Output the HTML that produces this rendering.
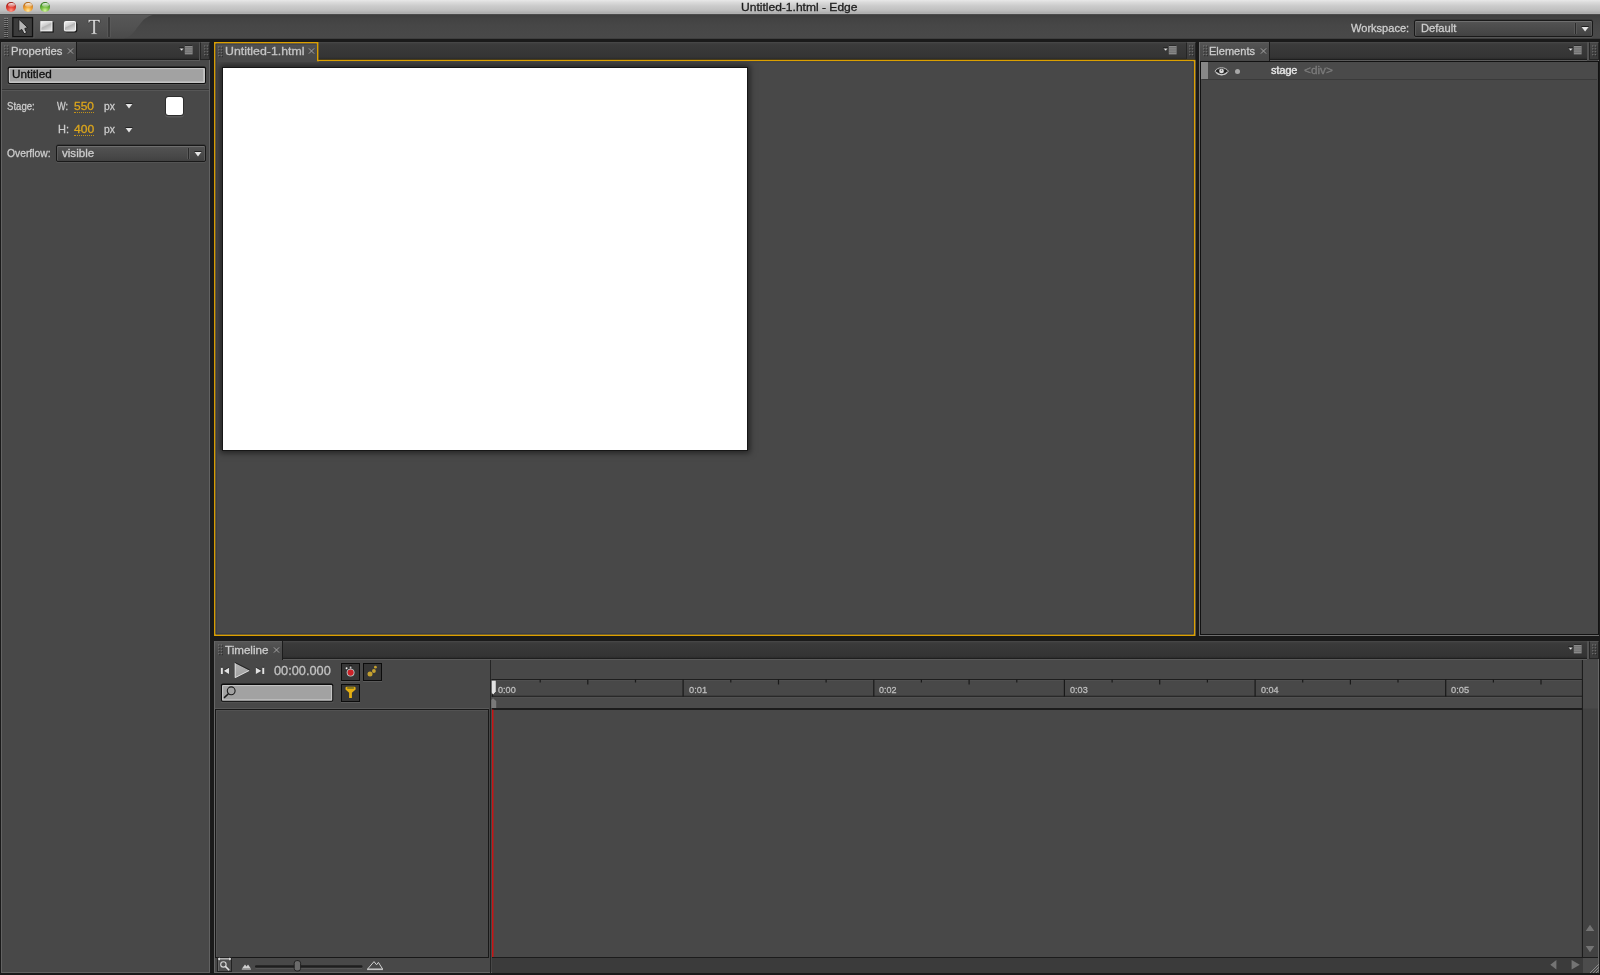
<!DOCTYPE html>
<html><head><meta charset="utf-8">
<style>
*{box-sizing:border-box;margin:0;padding:0}
html,body{width:1600px;height:975px;overflow:hidden;background:#1a1a1a;font-family:"Liberation Sans",sans-serif;font-size:10.5px;color:#d2d2d2}
.abs{position:absolute}
#titlebar{left:0;top:0;width:1600px;height:14px;background:linear-gradient(#e8e8e8 0,#dadada 2.5px,#cbcbcb 6px,#c0c0c0 10px,#b2b2b2 12.4px,#a6a6a6 13px,#b0b0b0 13.5px,#8a8a8a 14px)}
#title{left:0;width:1600px;top:1px;text-align:center;font-size:11.5px;color:#1e1e1e;line-height:13px;letter-spacing:.15px}
.tl{width:10px;height:10px;border-radius:50%;top:2px}
#toolbar{left:0;top:14px;width:1600px;height:25px;background:linear-gradient(#565656 0,#3e3e3e 1.2px,#434343 5px,#474747 12px,#494949 24px,#333 25px)}
.panel{background:#484848}
.tabrow{height:19px;background:linear-gradient(#4a4a4a 0,#3e3e3e 1.5px,#3a3a3a 3px,#343434 15px,#2c2c2c 16.8px,#1e1e1e 17.2px,#1e1e1e 18px,#5c5c5c 18.2px,#5a5a5a 19px)}
.tab{height:19px;top:0;left:0;background:linear-gradient(#626262 0,#545454 1.5px,#4c4c4c 8px,#484848 18px);border-right:1px solid #1c1c1c;font-size:10.5px;color:#d6d6d6;line-height:18px;white-space:nowrap}
.txt{white-space:nowrap;line-height:12px}

.grip{width:4px;height:10px;background-image:radial-gradient(circle at 25% 25%,#8a8a8a 0,#8a8a8a .55px,transparent .8px);background-size:2px 2px;opacity:.9}
.gripbox{top:0;width:10px;height:17.5px;background:linear-gradient(#484848,#3a3a3a);border:1px solid #252525;border-top-color:#555}
.menuic{width:15px;height:10px}
.lbl{color:#cdcdcd;font-size:10.5px;letter-spacing:.25px}
.org{color:#d9a21b;font-size:11px;letter-spacing:.45px;border-bottom:1px dotted #c9961a;line-height:11px;height:12.5px}
.tri{width:8px;height:6px}

.tbtn{width:19px;height:18px;background:#363636;border:1px solid #0c0c0c;box-shadow:0 1px 0 rgba(255,255,255,.1)}
</style></head><body>
<div id="root" class="abs" style="left:0;top:0;width:1600px;height:975px;will-change:transform">
<div id="titlebar" class="abs"></div>
<div class="abs tl" style="left:6px;background:radial-gradient(circle at 50% 85%,#ff9a8a 0,#e8493c 35%,#b5211a 70%,#7a1a15 100%)"></div>
<div class="abs tl" style="left:23px;background:radial-gradient(circle at 50% 85%,#ffe9a0 0,#f2a83a 35%,#c9771b 70%,#8a5210 100%)"></div>
<div class="abs tl" style="left:40px;background:radial-gradient(circle at 50% 85%,#d4f5a0 0,#7cc245 35%,#3f8f22 70%,#2a5f18 100%)"></div>
<div class="abs" style="left:7.5px;top:2.5px;width:7px;height:4px;border-radius:50%;background:linear-gradient(rgba(255,255,255,.95),rgba(255,255,255,.15))"></div>
<div class="abs" style="left:24.5px;top:2.5px;width:7px;height:4px;border-radius:50%;background:linear-gradient(rgba(255,255,255,.95),rgba(255,255,255,.15))"></div>
<div class="abs" style="left:41.5px;top:2.5px;width:7px;height:4px;border-radius:50%;background:linear-gradient(rgba(255,255,255,.95),rgba(255,255,255,.15))"></div>

<div id="toolbar" class="abs"></div>
<!--TOOLBAR-->
<svg class="abs" style="left:0;top:14px" width="1600" height="25" viewBox="0 0 1600 25">
<defs>
<linearGradient id="rg" x1="0" y1="0" x2="1" y2="1"><stop offset="0" stop-color="#fdfdfd"/><stop offset=".5" stop-color="#d8d8d8"/><stop offset="1" stop-color="#a9a9a9"/></linearGradient>
<linearGradient id="rg2" x1="0" y1="0" x2=".6" y2="1"><stop offset="0" stop-color="#efefef"/><stop offset=".45" stop-color="#cfcfcf"/><stop offset=".55" stop-color="#b4b4b4"/><stop offset="1" stop-color="#d8d8d8"/></linearGradient><linearGradient id="gl" x1="0" y1="0" x2="0" y2="1"><stop offset="0" stop-color="#575757"/><stop offset=".5" stop-color="#525252"/><stop offset="1" stop-color="#4a4a4a"/></linearGradient>
</defs>
<path d="M0 .8 H153 C147 3 144 5 142.5 7 C140 10 139 11 137.5 13 C135 17 134 18 132.5 19.5 C130 22 128 23.5 124 24.2 H0Z" fill="url(#gl)"/>
<g stroke="#2a2a2a" stroke-width="1"><path d="M4.3 5.4h3.7M4.3 7.4h3.7M4.3 9.4h3.7M4.3 11.4h3.7M4.3 13.4h3.7M4.3 15.4h3.7M4.3 17.4h3.7M4.3 19.4h3.7M4.3 21.4h3.7M4.3 23.4h3.7"/></g><g stroke="#9c9c9c" stroke-width="1" opacity=".85"><path d="M4.3 4.4h1.5M6.5 4.4h1.5M4.3 6.4h1.5M6.5 6.4h1.5M4.3 8.4h1.5M6.5 8.4h1.5M4.3 10.4h1.5M6.5 10.4h1.5M4.3 12.4h1.5M6.5 12.4h1.5M4.3 18.4h1.5M6.5 18.4h1.5M4.3 20.4h1.5M6.5 20.4h1.5M4.3 22.4h1.5M6.5 22.4h1.5"/><path d="M4.3 14.4h1.5M6.5 14.4h1.5M4.3 16.4h1.5M6.5 16.4h1.5" opacity=".4"/></g>
<rect x="13.3" y="3.9" width="20.6" height="19.8" fill="none" stroke="#5a5a5a" stroke-width=".8"/><rect x="12.85" y="3.55" width="19.7" height="19.1" fill="#3c3c3c" stroke="#101010" stroke-width="1.3"/>
<path d="M18.9 5.3 L27.6 13.5 L24.8 14.5 L26.3 18.9 L24 19.5 L21.8 15.4 L18.9 17.2 Z" fill="#b6b6b6" stroke="#141414" stroke-width=".8" stroke-linejoin="round"/><path d="M24.2 18.2 L25.6 17.9" stroke="#eee" stroke-width="1"/>
<rect x="41.4" y="8.2" width="12.4" height="10.4" fill="#1b1b1b"/>
<rect x="40.3" y="7.1" width="12.2" height="10.3" fill="#f4f4f4"/><rect x="41.3" y="8.1" width="10.2" height="8.3" fill="url(#rg2)"/>
<rect x="64.9" y="8.2" width="12.4" height="10.4" rx="2" fill="#1b1b1b"/>
<rect x="63.9" y="7.1" width="12.2" height="10.3" rx="2" fill="#f4f4f4"/><rect x="64.9" y="8.1" width="10.2" height="8.3" rx="1.2" fill="url(#rg2)"/>
<path d="M88.2 5.5 H100 V9 H99 C98.7 7.6 98.2 7.1 96.6 7.1 H95.3 V18 C95.3 18.9 95.7 19.1 97.4 19.2 V20.2 H90.8 V19.2 C92.5 19.1 92.9 18.9 92.9 18 V7.1 H91.6 C90 7.1 89.5 7.6 89.2 9 H88.2 Z" fill="#dcdcdc" stroke="#2a2a2a" stroke-width=".5"/>
<rect x="107.4" y="2.8" width="3.2" height="20.4" fill="#5e5e5e"/><rect x="108.2" y="3.2" width="1.6" height="19.8" fill="#333"/>
</svg>
<div class="abs" style="left:1414px;top:20px;width:179px;height:16.5px;border:1px solid #191919;border-radius:2px;background:linear-gradient(#565656 0,#505050 3px,#474747 11px,#414141 100%);box-shadow:inset 0 1px 0 #6e6e6e,inset 1px 0 0 #5a5a5a,inset -1px 0 0 #5a5a5a,0 -.5px 0 #2a2a2a,0 1px 0 rgba(255,255,255,.07)"></div>
<div class="abs" style="left:1574px;top:22.5px;width:3px;height:11.5px;background:#585858"></div>
<div class="abs" style="left:1575px;top:22.5px;width:1px;height:11.5px;background:#2a2a2a"></div>
<svg class="abs" style="left:1580px;top:25px" width="10" height="8"><path d="M1.6 2 H8.6 L5.1 6.6Z" fill="#e4e4e4"/><path d="M1.5 1.5H8.7" stroke="#1a1a1a" stroke-width=".9"/></svg>

<!--PROPS-->
<div class="abs panel" style="left:1px;top:42px;width:209.4px;height:931px;border:1px solid #626262;border-top:none"></div>
<div class="abs tabrow" style="left:2px;top:42px;width:198px"></div>
<div class="abs tab" style="left:2px;top:42px;width:74.5px"></div>
<svg class="abs" style="left:4px;top:45px" width="5" height="12" viewBox="0 0 5 12"><g fill="#8c8c8c"><rect x="0.3" y="0.5" width="1" height="1"/><rect x="2.8" y="0.5" width="1" height="1"/><rect x="0.3" y="3.4" width="1" height="1"/><rect x="2.8" y="3.4" width="1" height="1"/><rect x="0.3" y="6.3" width="1" height="1"/><rect x="2.8" y="6.3" width="1" height="1"/><rect x="0.3" y="9.2" width="1" height="1"/><rect x="2.8" y="9.2" width="1" height="1"/></g><g fill="#222"><rect x="1.3" y="1.5" width="1" height="1"/><rect x="3.8" y="1.5" width="1" height="1"/><rect x="1.3" y="4.4" width="1" height="1"/><rect x="3.8" y="4.4" width="1" height="1"/><rect x="1.3" y="7.3" width="1" height="1"/><rect x="3.8" y="7.3" width="1" height="1"/><rect x="1.3" y="10.2" width="1" height="1"/><rect x="3.8" y="10.2" width="1" height="1"/></g></svg>
<svg class="abs" style="left:66.5px;top:47.5px" width="7" height="7" viewBox="0 0 7 7"><path d="M0.9 0.4 L6.1 5.6 M6.1 0.4 L0.9 5.6" stroke="#a2a2a2" stroke-width="1" fill="none"/></svg><svg class="abs menuic" style="top:44.6px;left:179px" viewBox="0 0 15 10"><path d="M0.2 3.2 H5 L2.6 6Z" fill="#e8e8e8" stroke="#1a1a1a" stroke-width=".4"/><path d="M0.2 2.7H5" stroke="#1c1c1c" stroke-width=".7"/><rect x="5.8" y="0.3" width="7.8" height="9.1" fill="#8a8a8a"/><path d="M5.8 2.8h7.8M5.8 5h7.8M5.8 7.2h7.8" stroke="#626262" stroke-width=".8"/><rect x="5.8" y="0" width="7.8" height="1" fill="#2a2a2a"/></svg>
<div class="abs" style="left:199px;top:42px;width:1.5px;height:17.5px;background:#525252"></div>
<div class="abs gripbox" style="left:200px;top:42px"></div>
<svg class="abs" style="left:203.5px;top:45px" width="5" height="12" viewBox="0 0 5 12"><g fill="#8c8c8c"><rect x="0.3" y="0.5" width="1" height="1"/><rect x="2.8" y="0.5" width="1" height="1"/><rect x="0.3" y="3.4" width="1" height="1"/><rect x="2.8" y="3.4" width="1" height="1"/><rect x="0.3" y="6.3" width="1" height="1"/><rect x="2.8" y="6.3" width="1" height="1"/><rect x="0.3" y="9.2" width="1" height="1"/><rect x="2.8" y="9.2" width="1" height="1"/></g><g fill="#222"><rect x="1.3" y="1.5" width="1" height="1"/><rect x="3.8" y="1.5" width="1" height="1"/><rect x="1.3" y="4.4" width="1" height="1"/><rect x="3.8" y="4.4" width="1" height="1"/><rect x="1.3" y="7.3" width="1" height="1"/><rect x="3.8" y="7.3" width="1" height="1"/><rect x="1.3" y="10.2" width="1" height="1"/><rect x="3.8" y="10.2" width="1" height="1"/></g></svg>
<svg class="abs" style="left:0;top:60px" width="212" height="30" viewBox="0 60 212 30"><rect x="7.6" y="84" width="198.6" height="1" fill="#5a5a5a" opacity=".7"/><rect x="7.8" y="66.4" width="198.2" height="17.5" rx="1.8" fill="#0e0e0e"/><rect x="8.8" y="68.1" width="196.2" height="14.8" rx=".8" fill="#c4c4c4"/><rect x="10" y="69.1" width="193.2" height="12.3" fill="#a2a2a2"/></svg>
<div class="abs" style="left:2px;top:88.5px;width:207.4px;height:1px;background:#343434"></div>
<div class="abs" style="left:2px;top:89.5px;width:207.4px;height:1px;background:#565656"></div>
<svg class="abs tri" style="left:124.5px;top:103px" viewBox="0 0 8 6"><path d="M0.6 0.9 H7.4 L4 5.6Z" fill="#e4e4e4"/><path d="M0.5 0.4H7.5" stroke="#1a1a1a" stroke-width=".9"/></svg>
<div class="abs" style="left:165.6px;top:96.5px;width:17.6px;height:18.2px;background:#fff;border-radius:2.5px;box-shadow:0 0 0 1px #2e2e2e,0 1.5px 0 1px rgba(255,255,255,.1)"></div>
<svg class="abs tri" style="left:124.5px;top:126.5px" viewBox="0 0 8 6"><path d="M0.6 0.9 H7.4 L4 5.6Z" fill="#e4e4e4"/><path d="M0.5 0.4H7.5" stroke="#1a1a1a" stroke-width=".9"/></svg>
<div class="abs" style="left:55.5px;top:145px;width:150px;height:16.5px;border:1px solid #191919;border-radius:2px;background:linear-gradient(#565656 0,#505050 3px,#474747 11px,#414141 100%);box-shadow:inset 0 1px 0 #6e6e6e,inset 1px 0 0 #5a5a5a,inset -1px 0 0 #5a5a5a,0 -.5px 0 #2a2a2a,0 1px 0 rgba(255,255,255,.07)"></div>
<div class="abs" style="left:186.5px;top:147.5px;width:3px;height:11.5px;background:#585858"></div>
<div class="abs" style="left:187.5px;top:147.5px;width:1px;height:11.5px;background:#2a2a2a"></div>
<svg class="abs tri" style="left:193.5px;top:150.8px" viewBox="0 0 8 6"><path d="M0.6 0.9 H7.4 L4 5.6Z" fill="#e4e4e4"/><path d="M0.5 0.4H7.5" stroke="#1a1a1a" stroke-width=".9"/></svg>

<!--STAGE-->
<div class="abs panel" style="left:214px;top:42px;width:982px;height:594px"></div>
<div class="abs tabrow" style="left:318px;top:42px;width:868.5px"></div>
<div class="abs" style="left:1185.5px;top:42px;width:1.5px;height:17.5px;background:#525252"></div>
<div class="abs gripbox" style="left:1186px;top:42px;width:9.5px"></div>
<svg class="abs" style="left:1188.5px;top:45px" width="5" height="12" viewBox="0 0 5 12"><g fill="#8c8c8c"><rect x="0.3" y="0.5" width="1" height="1"/><rect x="2.8" y="0.5" width="1" height="1"/><rect x="0.3" y="3.4" width="1" height="1"/><rect x="2.8" y="3.4" width="1" height="1"/><rect x="0.3" y="6.3" width="1" height="1"/><rect x="2.8" y="6.3" width="1" height="1"/><rect x="0.3" y="9.2" width="1" height="1"/><rect x="2.8" y="9.2" width="1" height="1"/></g><g fill="#222"><rect x="1.3" y="1.5" width="1" height="1"/><rect x="3.8" y="1.5" width="1" height="1"/><rect x="1.3" y="4.4" width="1" height="1"/><rect x="3.8" y="4.4" width="1" height="1"/><rect x="1.3" y="7.3" width="1" height="1"/><rect x="3.8" y="7.3" width="1" height="1"/><rect x="1.3" y="10.2" width="1" height="1"/><rect x="3.8" y="10.2" width="1" height="1"/></g></svg><svg class="abs menuic" style="top:44.6px;left:1162.8px" viewBox="0 0 15 10"><path d="M0.2 3.2 H5 L2.6 6Z" fill="#e8e8e8" stroke="#1a1a1a" stroke-width=".4"/><path d="M0.2 2.7H5" stroke="#1c1c1c" stroke-width=".7"/><rect x="5.8" y="0.3" width="7.8" height="9.1" fill="#8a8a8a"/><path d="M5.8 2.8h7.8M5.8 5h7.8M5.8 7.2h7.8" stroke="#626262" stroke-width=".8"/><rect x="5.8" y="0" width="7.8" height="1" fill="#2a2a2a"/></svg>
<div class="abs" style="left:215.5px;top:43.3px;width:101.7px;height:18.5px;background:linear-gradient(#5c5c5c 0,#525252 1.5px,#4b4b4b 8px,#484848 17px)"></div>
<svg class="abs" style="left:218px;top:46px" width="5" height="12" viewBox="0 0 5 12"><g fill="#8c8c8c"><rect x="0.3" y="0.5" width="1" height="1"/><rect x="2.8" y="0.5" width="1" height="1"/><rect x="0.3" y="3.4" width="1" height="1"/><rect x="2.8" y="3.4" width="1" height="1"/><rect x="0.3" y="6.3" width="1" height="1"/><rect x="2.8" y="6.3" width="1" height="1"/><rect x="0.3" y="9.2" width="1" height="1"/><rect x="2.8" y="9.2" width="1" height="1"/></g><g fill="#222"><rect x="1.3" y="1.5" width="1" height="1"/><rect x="3.8" y="1.5" width="1" height="1"/><rect x="1.3" y="4.4" width="1" height="1"/><rect x="3.8" y="4.4" width="1" height="1"/><rect x="1.3" y="7.3" width="1" height="1"/><rect x="3.8" y="7.3" width="1" height="1"/><rect x="1.3" y="10.2" width="1" height="1"/><rect x="3.8" y="10.2" width="1" height="1"/></g></svg>
<svg class="abs" style="left:308px;top:47.5px" width="7" height="7" viewBox="0 0 7 7"><path d="M0.9 0.4 L6.1 5.6 M6.1 0.4 L0.9 5.6" stroke="#a2a2a2" stroke-width="1" fill="none"/></svg>
<div class="abs" style="left:216px;top:61.5px;width:978px;height:573px;overflow:hidden"><div class="abs" style="left:7px;top:6.5px;width:524.3px;height:382px;background:#fff;box-shadow:0 0 0 1px #171717,0 0 6px 3px rgba(0,0,0,.52)"></div></div>
<svg class="abs" style="left:212px;top:40px" width="988" height="600" viewBox="212 40 988 600"><path d="M214.75 42.7 H317.7 V60.45 H1194.55 V635.2 H214.75 Z" fill="none" stroke="#dca000" stroke-width="1.4"/><path d="M216.1 44 H316.3 M319 61.7 H1193.2 V633.9 H216.1 V44" fill="none" stroke="#2c3448" stroke-width=".9" opacity=".8"/></svg>

<!--ELEMENTS-->
<div class="abs panel" style="left:1199px;top:42px;width:400px;height:594px;border:1px solid #6e6e6e;border-top:none"></div>
<div class="abs tabrow" style="left:1200px;top:42px;width:387px"></div>
<div class="abs tab" style="left:1200px;top:42px;width:69.5px"></div>
<svg class="abs" style="left:1202.5px;top:45px" width="5" height="12" viewBox="0 0 5 12"><g fill="#8c8c8c"><rect x="0.3" y="0.5" width="1" height="1"/><rect x="2.8" y="0.5" width="1" height="1"/><rect x="0.3" y="3.4" width="1" height="1"/><rect x="2.8" y="3.4" width="1" height="1"/><rect x="0.3" y="6.3" width="1" height="1"/><rect x="2.8" y="6.3" width="1" height="1"/><rect x="0.3" y="9.2" width="1" height="1"/><rect x="2.8" y="9.2" width="1" height="1"/></g><g fill="#222"><rect x="1.3" y="1.5" width="1" height="1"/><rect x="3.8" y="1.5" width="1" height="1"/><rect x="1.3" y="4.4" width="1" height="1"/><rect x="3.8" y="4.4" width="1" height="1"/><rect x="1.3" y="7.3" width="1" height="1"/><rect x="3.8" y="7.3" width="1" height="1"/><rect x="1.3" y="10.2" width="1" height="1"/><rect x="3.8" y="10.2" width="1" height="1"/></g></svg>
<svg class="abs" style="left:1260px;top:47.5px" width="7" height="7" viewBox="0 0 7 7"><path d="M0.9 0.4 L6.1 5.6 M6.1 0.4 L0.9 5.6" stroke="#a2a2a2" stroke-width="1" fill="none"/></svg><svg class="abs menuic" style="top:44.6px;left:1567.5px" viewBox="0 0 15 10"><path d="M0.2 3.2 H5 L2.6 6Z" fill="#e8e8e8" stroke="#1a1a1a" stroke-width=".4"/><path d="M0.2 2.7H5" stroke="#1c1c1c" stroke-width=".7"/><rect x="5.8" y="0.3" width="7.8" height="9.1" fill="#8a8a8a"/><path d="M5.8 2.8h7.8M5.8 5h7.8M5.8 7.2h7.8" stroke="#626262" stroke-width=".8"/><rect x="5.8" y="0" width="7.8" height="1" fill="#2a2a2a"/></svg>
<div class="abs" style="left:1587px;top:42px;width:1.5px;height:17.5px;background:#525252"></div>
<div class="abs gripbox" style="left:1588.5px;top:42px"></div>
<svg class="abs" style="left:1591.5px;top:45px" width="5" height="12" viewBox="0 0 5 12"><g fill="#8c8c8c"><rect x="0.3" y="0.5" width="1" height="1"/><rect x="2.8" y="0.5" width="1" height="1"/><rect x="0.3" y="3.4" width="1" height="1"/><rect x="2.8" y="3.4" width="1" height="1"/><rect x="0.3" y="6.3" width="1" height="1"/><rect x="2.8" y="6.3" width="1" height="1"/><rect x="0.3" y="9.2" width="1" height="1"/><rect x="2.8" y="9.2" width="1" height="1"/></g><g fill="#222"><rect x="1.3" y="1.5" width="1" height="1"/><rect x="3.8" y="1.5" width="1" height="1"/><rect x="1.3" y="4.4" width="1" height="1"/><rect x="3.8" y="4.4" width="1" height="1"/><rect x="1.3" y="7.3" width="1" height="1"/><rect x="3.8" y="7.3" width="1" height="1"/><rect x="1.3" y="10.2" width="1" height="1"/><rect x="3.8" y="10.2" width="1" height="1"/></g></svg>
<div class="abs" style="left:1200px;top:60.6px;width:398.5px;height:574.4px;border:1.3px solid #121212;background:#484848"></div>
<div class="abs" style="left:1201.5px;top:61.5px;width:395.5px;height:18px;background:#4a4a4a;border-bottom:1px solid #3a3a3a"></div>
<div class="abs" style="left:1201.2px;top:62px;width:6.8px;height:17px;background:#888"></div>
<svg class="abs" style="left:1214px;top:65px" width="16" height="12" viewBox="0 0 16 12"><path d="M1 6.1 C3.4 1.6 11.4 1.6 14.4 6.1 C11.4 10.9 3.4 10.9 1 6.1Z" fill="#363636" stroke="#bdbdbd" stroke-width="1"/><path d="M3.6 5.2 L4.6 7.2 M11.6 5.2 L10.6 7.2" stroke="#1c1c1c" stroke-width="1.4"/><path d="M2.2 7.4 C4.8 10.6 10.4 10.6 13.2 7.4" stroke="#c8c8c8" stroke-width="1.3" fill="none"/><circle cx="7.5" cy="6" r="2.35" fill="#dedede"/><circle cx="7.5" cy="5.3" r=".7" fill="#666"/></svg>
<div class="abs" style="left:1235px;top:68.5px;width:5px;height:5px;border-radius:50%;background:#a8a8a8"></div>

<!--TIMELINE-->
<div class="abs panel" style="left:214px;top:641px;width:1385px;height:332px;border:1px solid #676767;border-top:none"></div>
<div class="abs tabrow" style="left:215px;top:641px;width:1372px"></div>
<div class="abs tab" style="left:215px;top:641px;width:67.5px"></div>
<svg class="abs" style="left:217.5px;top:644px" width="5" height="12" viewBox="0 0 5 12"><g fill="#8c8c8c"><rect x="0.3" y="0.5" width="1" height="1"/><rect x="2.8" y="0.5" width="1" height="1"/><rect x="0.3" y="3.4" width="1" height="1"/><rect x="2.8" y="3.4" width="1" height="1"/><rect x="0.3" y="6.3" width="1" height="1"/><rect x="2.8" y="6.3" width="1" height="1"/><rect x="0.3" y="9.2" width="1" height="1"/><rect x="2.8" y="9.2" width="1" height="1"/></g><g fill="#222"><rect x="1.3" y="1.5" width="1" height="1"/><rect x="3.8" y="1.5" width="1" height="1"/><rect x="1.3" y="4.4" width="1" height="1"/><rect x="3.8" y="4.4" width="1" height="1"/><rect x="1.3" y="7.3" width="1" height="1"/><rect x="3.8" y="7.3" width="1" height="1"/><rect x="1.3" y="10.2" width="1" height="1"/><rect x="3.8" y="10.2" width="1" height="1"/></g></svg>
<svg class="abs" style="left:272.5px;top:646.5px" width="7" height="7" viewBox="0 0 7 7"><path d="M0.9 0.4 L6.1 5.6 M6.1 0.4 L0.9 5.6" stroke="#a2a2a2" stroke-width="1" fill="none"/></svg><svg class="abs menuic" style="top:643.9px;left:1567.5px" viewBox="0 0 15 10"><path d="M0.2 3.2 H5 L2.6 6Z" fill="#e8e8e8" stroke="#1a1a1a" stroke-width=".4"/><path d="M0.2 2.7H5" stroke="#1c1c1c" stroke-width=".7"/><rect x="5.8" y="0.3" width="7.8" height="9.1" fill="#8a8a8a"/><path d="M5.8 2.8h7.8M5.8 5h7.8M5.8 7.2h7.8" stroke="#626262" stroke-width=".8"/><rect x="5.8" y="0" width="7.8" height="1" fill="#2a2a2a"/></svg>
<div class="abs" style="left:1587px;top:641px;width:1.5px;height:17.5px;background:#525252"></div>
<div class="abs gripbox" style="left:1588.5px;top:641px"></div>
<svg class="abs" style="left:1591.5px;top:644px" width="5" height="12" viewBox="0 0 5 12"><g fill="#8c8c8c"><rect x="0.3" y="0.5" width="1" height="1"/><rect x="2.8" y="0.5" width="1" height="1"/><rect x="0.3" y="3.4" width="1" height="1"/><rect x="2.8" y="3.4" width="1" height="1"/><rect x="0.3" y="6.3" width="1" height="1"/><rect x="2.8" y="6.3" width="1" height="1"/><rect x="0.3" y="9.2" width="1" height="1"/><rect x="2.8" y="9.2" width="1" height="1"/></g><g fill="#222"><rect x="1.3" y="1.5" width="1" height="1"/><rect x="3.8" y="1.5" width="1" height="1"/><rect x="1.3" y="4.4" width="1" height="1"/><rect x="3.8" y="4.4" width="1" height="1"/><rect x="1.3" y="7.3" width="1" height="1"/><rect x="3.8" y="7.3" width="1" height="1"/><rect x="1.3" y="10.2" width="1" height="1"/><rect x="3.8" y="10.2" width="1" height="1"/></g></svg>
<!--TLCTRL-->
<svg class="abs" style="left:218px;top:660px" width="52" height="22" viewBox="0 0 52 22"><defs><linearGradient id="pg" x1="0" y1="0" x2="0" y2="1"><stop offset="0" stop-color="#b4b4b4"/><stop offset="1" stop-color="#a0a0a0"/></linearGradient></defs>
<rect x="2.9" y="7.6" width="1.9" height="6.4" fill="#e2e2e2"/><path d="M11 7.5 V14.1 L5.8 10.8Z" fill="#e2e2e2"/><path d="M2.9 7.3h1.9M11.2 7.2 L5.8 10.4" stroke="#222" stroke-width=".7" fill="none"/>
<path d="M16.9 2.9 V17.9 L31.6 10.4Z" fill="url(#pg)"/><path d="M17.2 2.9 V17.6 L31.2 10.5" fill="none" stroke="#ececec" stroke-width=".8"/><path d="M17 2.5 L31.8 10" stroke="#1e1e1e" stroke-width=".9"/>
<path d="M37.9 7.5 V14.1 L43.4 10.8Z" fill="#e2e2e2"/><rect x="44.3" y="7.6" width="1.9" height="6.4" fill="#e2e2e2"/><path d="M44.3 7.3h1.9M37.8 7.2 L43.4 10.4" stroke="#222" stroke-width=".7" fill="none"/></svg>
<div class="abs tbtn" style="left:341px;top:663px"></div>
<div class="abs tbtn" style="left:363px;top:663px"></div>
<div class="abs tbtn" style="left:341px;top:684px"></div>
<svg class="abs" style="left:341px;top:663px" width="19" height="18" viewBox="0 0 19 18"><rect x="8.8" y="3.2" width="1.6" height="2.4" fill="#c8c8c8"/><rect x="8.1" y="2.4" width="3" height="1" fill="#141414"/><circle cx="5.6" cy="5.3" r="1" fill="#f2f2f2"/><path d="M6.2 5.9 L7 6.7" stroke="#222" stroke-width=".9"/><circle cx="9.6" cy="9.6" r="3.9" fill="#b8d0d0"/><circle cx="9.6" cy="9.6" r="3.1" fill="#cc2228"/></svg>
<svg class="abs" style="left:363px;top:663px" width="19" height="18" viewBox="0 0 19 18"><circle cx="7" cy="11" r="2.5" fill="#c4a030"/><circle cx="10.9" cy="8" r="1.9" fill="#c4a030"/><circle cx="12.4" cy="4.2" r="1.4" fill="#c4a030"/></svg>
<svg class="abs" style="left:341px;top:684px" width="19" height="18" viewBox="0 0 19 18"><path d="M4.5 4 Q4.5 2.7 5.8 2.7 H13.3 Q14.6 2.7 14.6 4 V5.4 L10.9 8.8 V13.9 H8.1 V8.8 L4.5 5.4Z" fill="#e4ae12"/><rect x="6" y="3.2" width="7.2" height="1.5" rx=".7" fill="#6a6a22"/></svg>
<svg class="abs" style="left:216px;top:680px" width="124" height="26" viewBox="216 680 124 26"><rect x="220.8" y="701.9" width="112.6" height="1" fill="#5a5a5a" opacity=".7"/><rect x="221" y="683.5" width="112.2" height="18.3" rx="1.8" fill="#0e0e0e"/><rect x="222" y="685.1" width="110.2" height="15.7" rx=".8" fill="#c4c4c4"/><rect x="223.2" y="686.1" width="107.8" height="13.2" fill="#a2a2a2"/></svg>
<svg class="abs" style="left:223px;top:685px" width="14" height="15" viewBox="0 0 14 15"><circle cx="8.2" cy="5.8" r="3.9" fill="none" stroke="#1c1c1c" stroke-width="1.1"/><path d="M5.4 8.8 L1 12.9" stroke="#1c1c1c" stroke-width="1.5"/></svg>
<div class="abs" style="left:215px;top:709px;width:273.8px;height:249px;border:1.5px solid #181818;background:#484848;box-shadow:0 -1px 0 #585858,inset 1px 1px 0 #525252"></div>

<!--TLRULER-->
<div class="abs" style="left:490.2px;top:659.5px;width:1.2px;height:313px;background:#242424"></div>
<div class="abs" style="left:492px;top:697px;width:1090px;height:11px;background:#4b4b4b"></div>
<div class="abs" style="left:491.5px;top:708.3px;width:1091px;height:1.4px;background:#1c1c1c"></div>
<svg class="abs" style="left:0;top:0" width="1600" height="975" viewBox="0 0 1600 975" pointer-events="none">
<path d="M491.5 679.5 H1582 M491.5 696.3 H1582" stroke="#1e1e1e" stroke-width="1.1" fill="none"/>
<path d="M491.5 680.6 H1582 M491.5 697.4 H1582" stroke="#5a5a5a" stroke-width=".8" fill="none" opacity=".6"/>
<path d="M492.5 679.5v17 M540.2 679.5v3 M587.8 679.5v5 M635.5 679.5v3 M683.1 679.5v17 M730.8 679.5v3 M778.5 679.5v5 M826.1 679.5v3 M873.8 679.5v17 M921.4 679.5v3 M969.1 679.5v5 M1016.8 679.5v3 M1064.4 679.5v17 M1112.1 679.5v3 M1159.7 679.5v5 M1207.4 679.5v3 M1255.1 679.5v17 M1302.7 679.5v3 M1350.4 679.5v5 M1398.0 679.5v3 M1445.7 679.5v17 M1493.4 679.5v3 M1541.0 679.5v5" stroke="#191919" stroke-width="1.2" fill="none"/>
<path d="M1582.5 660 V972" stroke="#1c1c1c" stroke-width="1.2"/>
<path d="M491.3 680.2 H496.2 V691.6 L493.3 694.8 L491.3 693Z" fill="#e2e2e2" stroke="#222" stroke-width=".6"/>
<path d="M491.3 708 V700 L493 698.2 L496.2 701 V708Z" fill="#7a7a7a"/>
<rect x="492" y="709.6" width="1.5" height="247.6" fill="#c81414"/>
</svg>

<!--TLBOTTOM-->
<div class="abs" style="left:1583px;top:660px;width:14.5px;height:297px;background:linear-gradient(#4a4a4a 0,#4a4a4a 48px,#424242 49px,#424242 100%)"></div>
<div class="abs" style="left:492px;top:957px;width:1091px;height:15.5px;background:#3b3b3b;border-top:1.2px solid #1c1c1c"></div>
<div class="abs" style="left:1583px;top:957px;width:15px;height:15.5px;background:#4c4c4c;border-top:1.2px solid #1c1c1c"></div>
<svg class="abs" style="left:1540px;top:920px" width="60" height="55" viewBox="1540 920 60 55">
<path d="M1590 924.8 L1594.3 931 H1585.7Z M1590 952.2 L1594.3 946 H1585.7Z M1550.3 964.7 L1556.4 960 V969.4Z M1579.8 964.7 L1571.6 960 V969.4Z" fill="#747474"/>
<path d="M1590 973 L1599 964 M1593 973 L1599 967 M1596 973 L1599 970" stroke="#8a8a8a" stroke-width="1"/>
</svg>
<div class="abs" style="left:217px;top:957px;width:14.5px;height:14.5px;background:#4e4e4e;border:1px solid #222;box-shadow:inset 1px 1px 0 #666"></div>
<svg class="abs" style="left:217px;top:957px" width="15" height="15" viewBox="0 0 15 15"><path d="M1 1.9 H14" stroke="#dcdcdc" stroke-width="1"/><path d="M0.6 1.9 L3 0.4 V3.4Z M14.4 1.9 L12 0.4 V3.4Z" fill="#dcdcdc"/><circle cx="6.4" cy="7.4" r="2.7" fill="none" stroke="#d6d6d6" stroke-width="1.1"/><path d="M8.4 9.4 L12.2 13.2" stroke="#e2e2e2" stroke-width="1.6"/></svg>
<svg class="abs" style="left:240px;top:958px" width="150" height="15" viewBox="240 958 150 15">
<path d="M242 968.6 L245 964.6 L246.6 966.6 L248 964.4 L250.8 968.6Z" fill="#cfcfcf"/><path d="M241.8 969.2 H251" stroke="#cfcfcf" stroke-width=".8"/>
<rect x="255" y="965.3" width="107.5" height="2.5" rx="1.2" fill="#1e1e1e"/><rect x="255.5" y="967.9" width="106.5" height=".8" fill="#5c5c5c"/>
<rect x="294.2" y="960.6" width="6.4" height="10.4" rx="2.6" fill="#6a6a6a" stroke="#222" stroke-width="1"/>
<path d="M367.6 969 L374 961.6 L376.6 964.8 L378.4 962.4 L382.6 969Z" fill="none" stroke="#cfcfcf" stroke-width="1"/><path d="M367 969.6 H383" stroke="#cfcfcf" stroke-width=".9"/>
</svg>


<div class="abs" style="left:74.3px;top:111.6px;width:20.2px;height:0;border-top:1px dotted #c39318"></div>
<div class="abs" style="left:74.3px;top:134.9px;width:20.2px;height:0;border-top:1px dotted #c39318"></div>
<div class="abs txt" style="left:741.01px;top:0.00px;font-size:10.5px;line-height:14px;color:#1c1c1c;transform-origin:0 0;transform:scaleX(1.1471);-webkit-text-stroke:.28px;">Untitled-1.html - Edge</div>
<div class="abs txt" style="left:1350.64px;top:21.00px;font-size:10.8px;line-height:14px;color:#cfcfcf;transform-origin:0 0;transform:scaleX(1.0237);-webkit-text-stroke:.28px;">Workspace:</div>
<div class="abs txt" style="left:1420.57px;top:21.00px;font-size:10.8px;line-height:14px;color:#cfcfcf;transform-origin:0 0;transform:scaleX(1.0328);-webkit-text-stroke:.28px;">Default</div>
<div class="abs txt" style="left:11.07px;top:44.00px;font-size:10.8px;line-height:14px;color:#cdcdcd;transform-origin:0 0;transform:scaleX(1.0459);-webkit-text-stroke:.28px;">Properties</div>
<div class="abs txt" style="left:12.16px;top:67.50px;font-size:10.3px;line-height:14px;color:#101010;transform-origin:0 0;transform:scaleX(1.1385);-webkit-text-stroke:.28px;">Untitled</div>
<div class="abs txt" style="left:7.03px;top:99.00px;font-size:11px;line-height:14px;color:#cdcdcd;transform-origin:0 0;transform:scaleX(0.8715);-webkit-text-stroke:.28px;">Stage:</div>
<div class="abs txt" style="left:57.14px;top:99.00px;font-size:11px;line-height:14px;color:#cdcdcd;transform-origin:0 0;transform:scaleX(0.8353);-webkit-text-stroke:.28px;">W:</div>
<div class="abs txt" style="left:74.08px;top:99.00px;font-size:11.3px;line-height:14px;color:#dba51c;transform-origin:0 0;transform:scaleX(1.0591);-webkit-text-stroke:.28px;">550</div>
<div class="abs txt" style="left:104.49px;top:99.00px;font-size:11px;line-height:14px;color:#cdcdcd;transform-origin:0 0;transform:scaleX(0.9384);-webkit-text-stroke:.28px;">px</div>
<div class="abs txt" style="left:58.21px;top:122.00px;font-size:11px;line-height:14px;color:#cdcdcd;transform-origin:0 0;transform:scaleX(1.0025);-webkit-text-stroke:.28px;">H:</div>
<div class="abs txt" style="left:74.03px;top:122.00px;font-size:11.3px;line-height:14px;color:#dba51c;transform-origin:0 0;transform:scaleX(1.0717);-webkit-text-stroke:.28px;">400</div>
<div class="abs txt" style="left:104.49px;top:122.00px;font-size:11px;line-height:14px;color:#cdcdcd;transform-origin:0 0;transform:scaleX(0.9384);-webkit-text-stroke:.28px;">px</div>
<div class="abs txt" style="left:7.00px;top:146.00px;font-size:11px;line-height:14px;color:#cdcdcd;transform-origin:0 0;transform:scaleX(0.9380);-webkit-text-stroke:.28px;">Overflow:</div>
<div class="abs txt" style="left:61.95px;top:146.00px;font-size:11px;line-height:14px;color:#cdcdcd;transform-origin:0 0;transform:scaleX(1.0533);-webkit-text-stroke:.28px;">visible</div>
<div class="abs txt" style="left:225.03px;top:44.00px;font-size:10.8px;line-height:14px;color:#c4c4c4;transform-origin:0 0;transform:scaleX(1.1413);-webkit-text-stroke:.28px;">Untitled-1.html</div>
<div class="abs txt" style="left:1208.63px;top:44.00px;font-size:10.8px;line-height:14px;color:#cdcdcd;transform-origin:0 0;transform:scaleX(1.0213);-webkit-text-stroke:.28px;">Elements</div>
<div class="abs txt" style="left:1271.00px;top:63.00px;font-size:11px;line-height:14px;color:#dedede;transform-origin:0 0;transform:scaleX(0.9737);-webkit-text-stroke:.28px;text-shadow:.35px 0 0 #dedede;">stage</div>
<div class="abs txt" style="left:1304.02px;top:63.00px;font-size:11px;line-height:14px;color:#7c7c7c;transform-origin:0 0;transform:scaleX(1.0758);-webkit-text-stroke:.28px;">&lt;div&gt;</div>
<div class="abs txt" style="left:225.00px;top:643.00px;font-size:10.8px;line-height:14px;color:#cdcdcd;transform-origin:0 0;transform:scaleX(1.0753);-webkit-text-stroke:.28px;">Timeline</div>
<div class="abs txt" style="left:273.99px;top:664.00px;font-size:12.2px;line-height:14px;color:#c2c2c2;transform-origin:0 0;transform:scaleX(1.0462);-webkit-text-stroke:.28px;">00:00.000</div>
<div class="abs txt" style="left:498.00px;top:683.00px;font-size:9px;line-height:14px;color:#bdbdbd;transform-origin:0 0;transform:scaleX(1.0116);-webkit-text-stroke:.28px;">0:00</div>
<div class="abs txt" style="left:688.59px;top:683.00px;font-size:9px;line-height:14px;color:#bdbdbd;transform-origin:0 0;transform:scaleX(1.0322);-webkit-text-stroke:.28px;">0:01</div>
<div class="abs txt" style="left:879.39px;top:683.00px;font-size:9px;line-height:14px;color:#bdbdbd;transform-origin:0 0;transform:scaleX(0.9992);-webkit-text-stroke:.28px;">0:02</div>
<div class="abs txt" style="left:1069.59px;top:683.00px;font-size:9px;line-height:14px;color:#bdbdbd;transform-origin:0 0;transform:scaleX(1.0121);-webkit-text-stroke:.28px;">0:03</div>
<div class="abs txt" style="left:1260.78px;top:683.00px;font-size:9px;line-height:14px;color:#bdbdbd;transform-origin:0 0;transform:scaleX(1.0048);-webkit-text-stroke:.28px;">0:04</div>
<div class="abs txt" style="left:1451.00px;top:683.00px;font-size:9px;line-height:14px;color:#bdbdbd;transform-origin:0 0;transform:scaleX(1.0345);-webkit-text-stroke:.28px;">0:05</div>
</div>
</body></html>
